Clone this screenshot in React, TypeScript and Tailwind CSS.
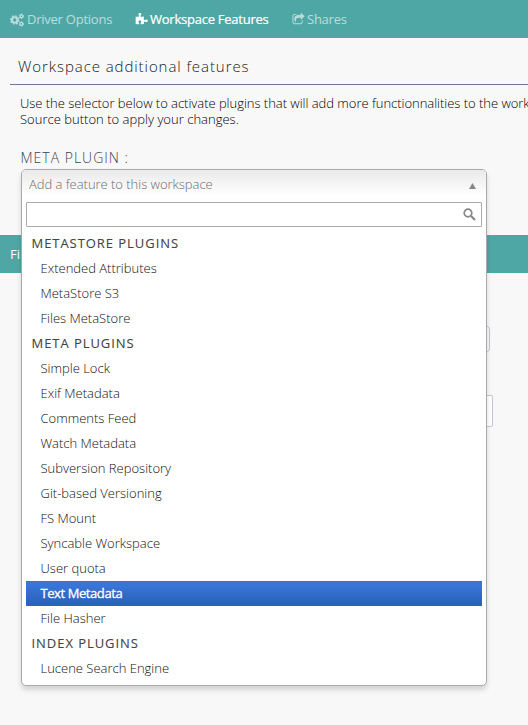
const groups = [
  { title: "METASTORE PLUGINS", items: ["Extended Attributes", "MetaStore S3", "Files MetaStore"] },
  {
    title: "META PLUGINS",
    items: [
      "Simple Lock", "Exif Metadata", "Comments Feed", "Watch Metadata", "Subversion Repository",
      "Git-based Versioning", "FS Mount", "Syncable Workspace", "User quota", "Text Metadata", "File Hasher",
    ],
  },
  { title: "INDEX PLUGINS", items: ["Lucene Search Engine"] },
];

function CogsIcon() {
  return (
    <svg viewBox="0 0 14 14" className="h-[14px] w-[14px]" fill="none" stroke="currentColor">
      <circle cx="4.7" cy="7" r="2.75" strokeWidth="2.2" />
      <circle cx="4.7" cy="7" r="4.1" strokeWidth="1.4" strokeDasharray="1.7 1.52" />
      <circle cx="11.4" cy="3.2" r="1.5" strokeWidth="1.4" />
      <circle cx="11.4" cy="3.2" r="2.25" strokeWidth="0.8" strokeDasharray="1.2 1.15" />
      <circle cx="11.4" cy="10.9" r="1.5" strokeWidth="1.4" />
      <circle cx="11.4" cy="10.9" r="2.25" strokeWidth="0.8" strokeDasharray="1.2 1.15" />
    </svg>
  );
}

function PuzzleIcon() {
  return (
    <svg viewBox="0 0 1792 1792" className="h-[13px] w-[13px]" fill="currentColor">
      <path d="M1755 1083q0 81-44.5 135t-123.5 54q-41 0-77.5-17.5t-59-38-56.5-38-71-17.5q-110 0-110 124 0 39 16 115t15 115v5q-22 0-33 1-34 3-97.5 11.5t-115.5 13.5-98 5q-61 0-103-26.5t-42-83.5q0-37 17.5-71t38-56.5 38-59 17.5-77.5q0-79-54-123.5t-135-44.5q-84 0-143 45.5t-59 127.5q0 43 15 83t33.5 64.5 33.5 53 15 50.5q0 45-46 89-37 35-117 35-95 0-245-24-9-2-27.5-4t-27.5-4l-13-2q-1 0-3-1-2 0-2-1v-1024q2 1 17.5 3.5t34 5 21.5 3.5q150 24 245 24 80 0 117-35 46-44 46-89 0-22-15-50.5t-33.5-53-33.5-64.5-15-83q0-82 59-127.5t144-45.5q80 0 134 44.5t54 123.5q0 41-17.5 77.5t-38 59-38 56.5-17.5 71q0 57 42 83.5t103 26.5q64 0 180-15t163-17v2q-1 2-3.5 17.5t-5 34-3.5 21.5q-24 150-24 245 0 80 35 117 44 46 89 46 22 0 50.5-15t53-33.5 64.5-33.5 83-15q82 0 127.5 59t45.5 143z" />
    </svg>
  );
}

function ShareIcon() {
  return (
    <svg viewBox="0 0 1792 1792" className="h-[13px] w-[13px]" fill="currentColor">
      <path d="M1472 989v259q0 119-84.5 203.5t-203.5 84.5h-832q-119 0-203.5-84.5t-84.5-203.5v-832q0-119 84.5-203.5t203.5-84.5h255q13 0 22.5 9.5t9.5 22.5q0 27-26 32-77 26-133 60-10 4-16 4h-112q-66 0-113 47t-47 113v832q0 66 47 113t113 47h832q66 0 113-47t47-113v-214q0-19 18-29 28-13 54-37 16-16 35-8 21 9 21 29zm237-496l-384 384q-18 19-45 19-12 0-25-5-39-17-39-59v-192h-160q-323 0-438 131-119 137-74 473 3 23-20 34-8 2-12 2-16 0-26-13-10-14-21-31t-39.5-68.5-49.5-99.5-38.5-114-17.5-122q0-49 3.5-91t14-90 28-88 47-81.5 68.5-74 94.5-61.5 124.5-48.5 159.5-30.5 196.5-11h160v-192q0-42 39-59 13-5 25-5 26 0 45 19l384 384q19 19 19 45t-19 45z" />
    </svg>
  );
}

function Dropdown() {
  return (
    <div className="absolute left-[21px] top-0 z-10 h-[517px] w-[466px] rounded-[5px] border border-[#aaa] bg-white shadow-[0_4px_5px_rgba(0,0,0,0.15)]">
      <div className="flex h-8 items-center justify-between rounded-t-[4px] bg-linear-to-b from-[#eaeaea] to-white to-80% pl-[7px] pr-[10px] text-[#6c6c6c]">
        <span className="-mt-[2px] tracking-[-0.03px]">Add a feature to this workspace</span>
        <svg viewBox="0 0 7 6" className="-mt-px h-[6px] w-[7px]" fill="#888"><path d="M3.5 0 7 6H0Z" /></svg>
      </div>
      <div className="mx-1 flex h-[25px] items-center justify-end rounded-[1px] border border-[#aaa] bg-white pr-[5px]">
        <svg viewBox="0 0 13 13" className="h-[13px] w-[13px]" fill="none" stroke="#888">
          <circle cx="5" cy="5" r="3.8" strokeWidth="1.7" />
          <path d="m8 8 4 4" strokeWidth="2.3" />
        </svg>
      </div>
      <div className="mx-1 mt-1 text-[#111]">
        {groups.map((g) => (
          <div key={g.title}>
            <div className="h-[25px] pl-[5.5px] font-medium leading-[25px] tracking-[0.95px] text-[#444] [-webkit-text-stroke:0.1px_#444]">{g.title}</div>
            {g.items.map((item) => (
              <div
                key={item}
                className={
                  item === "Text Metadata"
                    ? "h-[25px] bg-linear-to-b from-[#3875d7] from-20% to-[#2a62bc] to-90% pl-[14.5px] font-normal leading-[25px] tracking-[-0.42px] text-white [-webkit-text-stroke:0.3px_white]"
                    : "h-[25px] pl-[14.5px] leading-[25px]"
                }
              >
                {item}
              </div>
            ))}
          </div>
        ))}
      </div>
    </div>
  );
}

export default function App() {
  return (
    <div className="h-[725px] w-[528px] overflow-hidden bg-[#f8f8f8] font-['Open_Sans',sans-serif] text-[13px] font-light text-black">
      <nav className="flex h-[38px] items-center bg-[#4fa7a5] pl-[10px] pt-px font-normal tracking-[-0.24px] text-white">
        <div className="flex w-[125px] items-center gap-[3px] opacity-60"><CogsIcon /><span>Driver Options</span></div>
        <div className="flex w-[157px] items-center gap-[2px] [-webkit-text-stroke:0.2px_white]"><PuzzleIcon /><span>Workspace Features</span></div>
        <div className="flex items-center gap-[2px] opacity-60"><ShareIcon /><span>Shares</span></div>
      </nav>
      <h1 className="ml-[10px] h-[47px] border-b border-[#6c7a93] pl-2 pt-4 text-[15px] leading-6 tracking-[0.93px] text-[#151b26]">Workspace additional features</h1>
      <p className="ml-5 mt-[10px] whitespace-nowrap leading-4 tracking-[-0.03px]">
        Use the selector below to activate plugins that will add more functionnalities to the workspace. Use the Save
        <br />
        <span className="tracking-[0.02px]">Source button to apply your changes.</span>
      </p>
      <div className="mt-5 h-[22px] pl-[20.5px] text-[14px] leading-[21px] tracking-[1px] text-[#3c4450]">META PLUGIN :</div>
      <div className="relative h-[66px]"><Dropdown /></div>
      <div className="h-[38px] bg-[#4fa7a5] pl-[10px] font-normal leading-[38px] text-white">Fi</div>
      <div className="ml-[200px] mt-[52px] h-7 w-[290px] rounded-[5px] border border-[#c4c6d0]" />
      <div className="ml-[200px] mt-[42px] h-8 w-[293px] rounded-[2px] border border-[#c4c6d0] bg-white" />
    </div>
  );
}
